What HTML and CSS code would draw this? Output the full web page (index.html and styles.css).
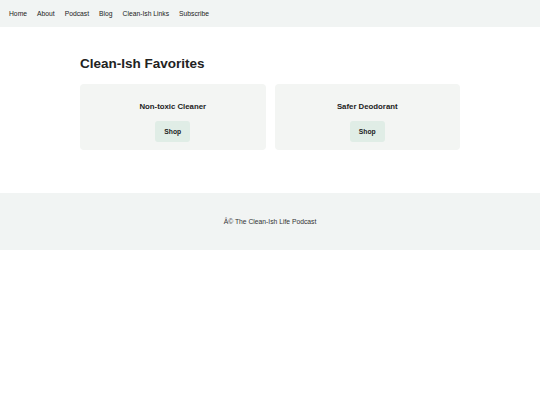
FILE: index.html
```html
<!DOCTYPE html>
<html lang="en">
<head>
<meta charset="utf-8">
<title>Clean-Ish Favorites</title>
<link rel="stylesheet" href="styles.css">
</head>
<body>
<nav class="topnav">
  <a href="#">Home</a>
  <a href="#">About</a>
  <a href="#">Podcast</a>
  <a href="#">Blog</a>
  <a href="#">Clean-Ish Links</a>
  <a href="#">Subscribe</a>
</nav>
<main class="content">
  <h1 class="title">Clean-Ish Favorites</h1>
  <div class="cards">
    <div class="card">
      <h3 class="card-title">Non-toxic Cleaner</h3>
      <a class="btn" href="#">Shop</a>
    </div>
    <div class="card">
      <h3 class="card-title">Safer Deodorant</h3>
      <a class="btn" href="#">Shop</a>
    </div>
  </div>
</main>
<footer class="footer">
  <p>Â© The Clean-Ish Life Podcast</p>
</footer>
</body>
</html>
```
FILE: styles.css
```css
* { box-sizing: border-box; }
body {
  margin: 0;
  font-family: "Liberation Sans", Arial, sans-serif;
  color: #222;
  background: #fff;
}
.topnav {
  display: flex;
  align-items: center;
  gap: 10px;
  height: 27px;
  padding-left: 9px;
  background: #f1f4f3;
}
.topnav a {
  font-size: 6.75px;
  color: #222;
  text-decoration: none;
}
.content {
  width: 380px;
  margin: 0 auto;
  padding-top: 29px;
}
.title {
  margin: 0 0 12px;
  font-size: 13.5px;
  line-height: 16px;
  font-weight: bold;
  color: #222;
}
.cards {
  display: grid;
  grid-template-columns: 1fr 1fr;
  gap: 9px;
}
.card {
  background: #f3f5f3;
  border-radius: 4px;
  padding: 18px 0 8px;
  display: flex;
  flex-direction: column;
  align-items: center;
}
.card-title {
  margin: 0 0 9px;
  font-size: 7.8px;
  line-height: 10px;
  font-weight: bold;
  color: #222;
}
.btn {
  display: flex;
  align-items: center;
  justify-content: center;
  height: 21px;
  padding: 0 9px;
  border-radius: 3px;
  background: #e0ede6;
  color: #222;
  font-size: 6.75px;
  font-weight: bold;
  text-decoration: none;
}
.footer {
  margin-top: 43px;
  height: 57px;
  background: #f1f4f3;
  display: flex;
  align-items: center;
  justify-content: center;
}
.footer p {
  margin: 0;
  font-size: 6.75px;
  color: #333;
}
```
